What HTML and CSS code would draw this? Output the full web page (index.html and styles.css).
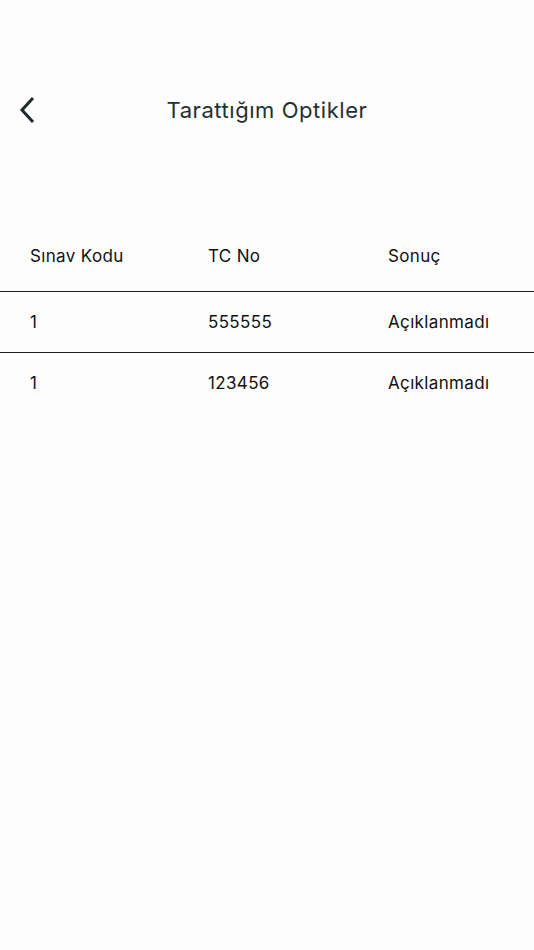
FILE: index.html
```html
<!DOCTYPE html>
<html lang="tr">
<head>
<meta charset="utf-8">
<title>Tarattığım Optikler</title>
<link rel="stylesheet" href="styles.css">
</head>
<body>
<div class="screen">
  <header class="topbar">
    <button class="back" aria-label="Geri">
      <svg width="16" height="28" viewBox="0 0 16 28"><path d="M14 2 L3 14 L14 26" fill="none" stroke="#1f2b2b" stroke-width="3" stroke-linecap="butt" stroke-linejoin="miter"/></svg>
    </button>
    <h1 class="title">Tarattığım Optikler</h1>
  </header>
  <div class="table">
    <div class="row head">
      <div class="cell c1">Sınav Kodu</div>
      <div class="cell c2">TC No</div>
      <div class="cell c3">Sonuç</div>
    </div>
    <div class="row">
      <div class="cell c1">1</div>
      <div class="cell c2">555555</div>
      <div class="cell c3">Açıklanmadı</div>
    </div>
    <div class="row last">
      <div class="cell c1">1</div>
      <div class="cell c2">123456</div>
      <div class="cell c3">Açıklanmadı</div>
    </div>
  </div>
</div>
</body>
</html>
```
FILE: styles.css
```css
html, body {
  margin: 0;
  padding: 0;
  background: #fdfdfd;
}
body {
  font-family: Inter, "Noto Sans", "Liberation Sans", sans-serif;
  color: #111;
}
.screen {
  width: 534px;
  height: 950px;
  display: flex;
  flex-direction: column;
}
.topbar {
  height: 40px;
  margin-top: 90px;
  display: flex;
  align-items: center;
  position: relative;
  justify-content: center;
}
.back {
  position: absolute;
  left: 19px;
  top: 6px;
  border: 0;
  background: none;
  padding: 0;
  width: 16px;
  height: 28px;
}
.back svg { display: block; }
.title {
  margin: 0;
  font-size: 22px;
  font-weight: 400;
  color: #243030;
  letter-spacing: 0.55px;
}
.table {
  margin-top: 91px;
  display: flex;
  flex-direction: column;
}
.row {
  display: grid;
  grid-template-columns: 178px 180px 1fr;
  height: 60px;
  align-items: center;
  padding-left: 30px;
  border-bottom: 1.5px solid #1c1c1c;
  font-size: 17px;
  letter-spacing: 0.35px;
}
.row.head { height: 70px; }
.row.last { border-bottom: 0; }
.cell { white-space: nowrap; }
```
